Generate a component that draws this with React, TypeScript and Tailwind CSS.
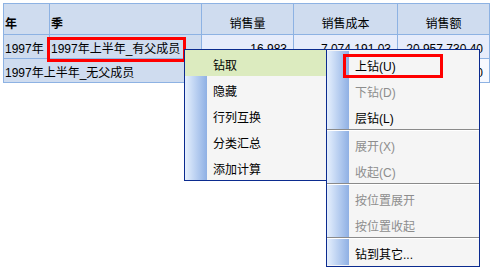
type Item = { label: string; key?: string; disabled?: boolean; active?: boolean };

const firstMenu: Item[] = [
  { label: "钻取", active: true },
  { label: "隐藏" },
  { label: "行列互换" },
  { label: "分类汇总" },
  { label: "添加计算" },
];

const secondMenu: (Item | "sep")[] = [
  { label: "上钻", key: "(U)" },
  { label: "下钻", key: "(D)", disabled: true },
  { label: "层钻", key: "(L)" },
  "sep",
  { label: "展开", key: "(X)", disabled: true },
  { label: "收起", key: "(C)", disabled: true },
  "sep",
  { label: "按位置展开", disabled: true },
  { label: "按位置收起", disabled: true },
  "sep",
  { label: "钻到其它..." },
];

function MenuRow({ item }: { item: Item }) {
  return (
    <div className={"flex h-[26px] " + (item.active ? "bg-[#dcebbf]" : "")}>
      <div
        className={
          "w-[22px] shrink-0 " +
          (item.active ? "" : "bg-gradient-to-r from-[#e6f0fd] to-[#8fb0e4]")
        }
      />
      <div
        className={
          "pl-[6px] pt-[8px] text-[12px] leading-[16px] " +
          (item.disabled ? "text-[#8d8d8d]" : "text-black")
        }
      >
        {item.label + (item.key ?? "")}
      </div>
    </div>
  );
}

export default function App() {
  const head = "flex items-end pb-[2px] border-r border-b border-[#8db2e3] bg-[#cfdcef] text-[12px] leading-[16px] h-[31px]";
  const cell = "flex items-end pb-[1px] border-r border-b border-[#8db2e3] text-[12px] leading-[16px] h-[24px]";

  return (
    <div
      className="relative w-[493px] h-[271px] bg-white overflow-hidden text-black"
      style={{ fontFamily: '"Liberation Sans", "Noto Sans CJK SC", sans-serif' }}
    >
      <div className="pt-[3px] pl-[3px]">
        <div className="grid grid-cols-[46px_152px_92px_104px_92px] w-[487px] border-l border-t border-[#8db2e3]">
          <div className={head + " pl-[1px] font-bold"}>年</div>
          <div className={head + " pl-[1px] font-bold"}>季</div>
          <div className={head + " justify-center"}>销售量</div>
          <div className={head + " justify-center"}>销售成本</div>
          <div className={head + " justify-center"}>销售额</div>

          <div className={cell + " pl-[1px] bg-[#cfdcef]"}>1997年</div>
          <div className={cell + " pl-[1px] bg-[#cfdcef]"}>1997年上半年_有父成员</div>
          <div className={cell + " justify-end pr-[6px] bg-[#e6ecfb]"}>16,983</div>
          <div className={cell + " justify-end pr-[6px] bg-[#e6ecfb]"}>7,074,191.03</div>
          <div className={cell + " justify-end pr-[6px] bg-[#e6ecfb]"}>20,957,730.40</div>

          <div className={cell + " col-span-2 pl-[1px] bg-[#cfdcef]"}>1997年上半年_无父成员</div>
          <div className={cell + " justify-end pr-[6px] bg-[#f7f9ff]"}>12,806</div>
          <div className={cell + " justify-end pr-[6px] bg-[#f7f9ff]"}>5,331,020.46</div>
          <div className={cell + " justify-end pr-[6px] bg-[#f7f9ff]"}>15,864,210.90</div>
        </div>
      </div>

      {/* selected cell */}
      <div className="absolute left-[47px] top-[37px] w-[139px] h-[25px] border-[3px] border-[#ff0000]" />

      {/* context menu */}
      <div className="absolute left-[184px] top-[49px] w-[143px] border border-[#0b2b8f] bg-[#f5f5f5]">
        {firstMenu.map((it) => (
          <MenuRow key={it.label} item={it} />
        ))}
      </div>

      {/* drill submenu */}
      <div className="absolute left-[326px] top-[49px] w-[154px] border border-[#0b2b8f] bg-[#f5f5f5] py-[1px]">
        {secondMenu.map((it, i) =>
          it === "sep" ? (
            <div key={i} className="h-[2px] border-t border-[#8a8a8a] bg-white" />
          ) : (
            <MenuRow key={i} item={it} />
          )
        )}
      </div>

      <div className="absolute left-[343px] top-[54px] w-[100px] h-[24px] border-[3px] border-[#ff0000]" />
    </div>
  );
}
